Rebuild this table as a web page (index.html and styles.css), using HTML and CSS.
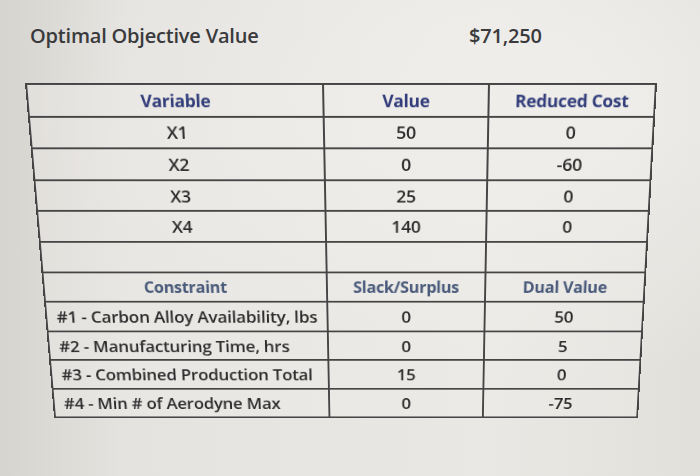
FILE: index.html
```html
<!DOCTYPE html>
<html>
<head>
<meta charset="utf-8">
<link rel="stylesheet" href="styles.css">
</head>
<body>
<div class="screen">
  <div class="summary">
    <span class="summary-label">Optimal Objective Value</span>
    <span class="summary-value">$71,250</span>
  </div>
  <table class="results">
    <colgroup>
      <col class="c1"><col class="c2"><col class="c3">
    </colgroup>
    <tr class="head head-var"><th>Variable</th><th>Value</th><th>Reduced Cost</th></tr>
    <tr><td>X1</td><td>50</td><td>0</td></tr>
    <tr><td>X2</td><td>0</td><td>-60</td></tr>
    <tr><td>X3</td><td>25</td><td>0</td></tr>
    <tr><td>X4</td><td>140</td><td>0</td></tr>
    <tr class="blank"><td></td><td></td><td></td></tr>
    <tr class="head head-con"><th>Constraint</th><th>Slack/Surplus</th><th>Dual Value</th></tr>
    <tr><td class="name">#1 - Carbon Alloy Availability, lbs</td><td>0</td><td>50</td></tr>
    <tr><td class="name">#2 - Manufacturing Time, hrs</td><td>0</td><td>5</td></tr>
    <tr><td class="name">#3 - Combined Production Total</td><td>15</td><td>0</td></tr>
    <tr><td class="name">#4 - Min # of Aerodyne Max</td><td>0</td><td>-75</td></tr>
  </table>
</div>
</body>
</html>
```
FILE: styles.css
```css
html, body {
  margin: 0;
  padding: 0;
}
body {
  width: 700px;
  height: 476px;
  overflow: hidden;
  font-family: "Open Sans", Lato, sans-serif;
  color: #2b2b2c;
  background:
    radial-gradient(ellipse 70% 60% at 75% 20%, #efeeeb 0%, rgba(239,238,235,0) 100%),
    linear-gradient(90deg, #d6d4cf 0%, #e4e3df 18%, #e9e8e4 70%, #e1e0db 100%);
}
.screen {
  padding: 22px 0 0 25px;
}
.summary {
  display: flex;
  align-items: baseline;
  padding-left: 5px;
  height: 28px;
  font-size: 20px;
  font-weight: 600;
  color: #3a3a3c;
  letter-spacing: -0.2px;
}
.summary-label {
  width: 439px;
}
.results {
  margin-top: 33px;
  width: 630px;
  border-collapse: collapse;
  table-layout: fixed;
  font-size: 18px;
  font-weight: 600;
  transform-origin: 50% 0;
  transform: perspective(1000px) rotateX(-12.8deg) skewX(0.85deg);
  background: rgba(240, 239, 236, 0.35);
}
.c1 { width: 297px; }
.c2 { width: 166px; }
.c3 { width: 167px; }
.results tr {
  height: 33.6px;
}
.results td, .results th {
  border: 2px solid #454546;
  text-align: center;
  padding: 0 10px;
  white-space: nowrap;
  letter-spacing: -0.2px;
}
.results th {
  font-weight: 700;
  letter-spacing: -0.3px;
}
.head-var th {
  color: #323d7a;
  font-size: 17.5px;
}
.head-con th {
  color: #4a5a7a;
  font-size: 17px;
}
.results td.name {
  text-align: left;
  padding-left: 10px;
}
```
